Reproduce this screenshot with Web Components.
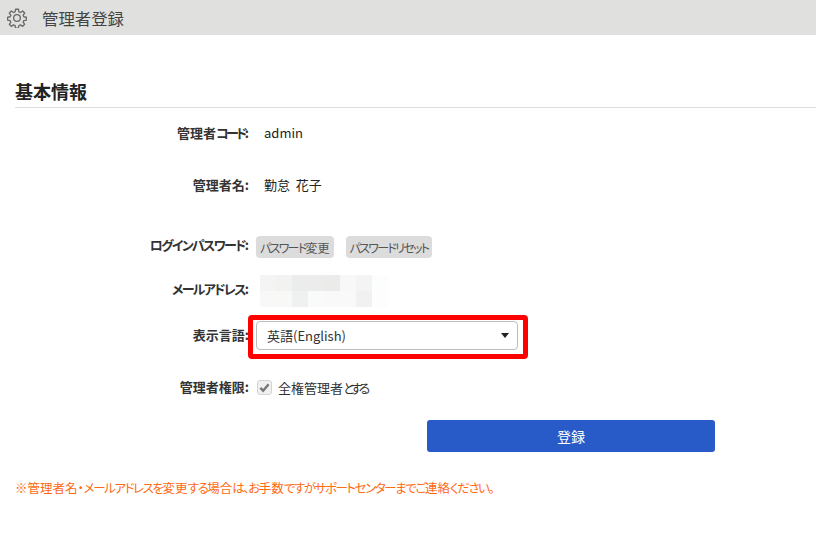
<!DOCTYPE html>
<html lang="ja"><head><meta charset="utf-8">
<style>
html,body{margin:0;padding:0;background:#fff}
body{font-family:"Noto Sans CJK JP","Noto Sans",sans-serif;color:#222;width:816px;height:536px;overflow:hidden;font-feature-settings:"palt"}
</style></head><body>
<app-header>管理者登録</app-header>
<main-form></main-form>
<template id="t-header"><style>
:host{display:flex;align-items:center;height:35px;background:#e0e0de;padding-left:7px;gap:15px;color:#444;font-size:16.4px;font-feature-settings:normal}
svg{display:block;width:20px;height:20px}
</style>
<svg viewBox="0 0 24 24" fill="none" stroke="#6a6a6a" stroke-width="1.6" stroke-linejoin="round"><circle cx="12" cy="12" r="4"/><path d="M10.3 1.5h3.4l.6 3.1 1.9.8 2.6-1.8 2.4 2.4-1.8 2.6.8 1.9 3.1.6v3.4l-3.1.6-.8 1.9 1.8 2.6-2.4 2.4-2.6-1.8-1.9.8-.6 3.1h-3.4l-.6-3.1-1.9-.8-2.6 1.8-2.4-2.4 1.8-2.6-.8-1.9-3.1-.6v-3.4l3.1-.6.8-1.9-1.8-2.6 2.4-2.4 2.6 1.8 1.9-.8z"/></svg>
<span><slot></slot></span></template>
<template id="t-row"><style>
:host{display:grid;grid-template-columns:249px 1fr;column-gap:7px;align-items:center;height:var(--h,20px)}
.l{text-align:right;font-size:13px;font-weight:700;color:#333;white-space:nowrap;padding-bottom:var(--lo,0)}
.v{display:flex;align-items:center;gap:12px;font-size:13px;min-width:0}
</style><div class="l"><slot name="label"></slot></div><div class="v"><slot></slot></div></template>
<template id="t-btn"><style>
:host{display:inline-flex;align-items:center;justify-content:center;height:22px;padding:0 4px;background:#dcdcdc;border-radius:4px;font-size:12px;color:#555;white-space:nowrap}
</style><slot></slot></template>
<template id="t-mosaic"><style>
:host{display:grid;grid-template-columns:repeat(8,16px);grid-auto-rows:16px}
i{display:block}
</style></template>
<template id="t-select"><style>
:host{display:block;position:relative;width:262px;height:29px;box-sizing:border-box;border:1px solid #bcbcbc;border-radius:4px;font-size:13px;color:#333}
.t{display:flex;align-items:center;justify-content:space-between;height:100%;padding:0 8px 1px 10px;box-sizing:border-box;font-feature-settings:normal}
.a{width:0;height:0;border:4px solid transparent;border-top:5px solid #222;border-bottom:0}
.r{position:absolute;left:-9px;right:-11px;top:-7px;bottom:-10px;border:5px solid #f00;border-radius:4px;pointer-events:none}
</style><div class="t"><span>英語(English)</span><span class="a"></span></div><div class="r"></div></template>
<template id="t-check"><style>
:host{display:inline-flex;align-items:center;gap:7px;font-size:13px;color:#333}
.b{width:15px;height:15px;margin-left:1px;margin-right:-1px;box-sizing:border-box;border:1px solid #d4d4d4;border-radius:3px;background:#f0f0f0;display:flex;align-items:center;justify-content:center}
svg{width:11px;height:11px;display:block}
</style><span class="b"><svg viewBox="0 0 12 12"><path d="M1.5 6.5l3 3 6-7" fill="none" stroke="#777" stroke-width="2.6"/></svg></span><span><slot></slot></span></template>
<template id="t-form"><style>
:host{display:block}
h2{margin:42px 0 0 15px;height:31px;box-sizing:border-box;border-bottom:1px solid #ddd;font-size:18px;font-weight:700;line-height:29px;color:#222}
.val{padding-left:8px}
.k{letter-spacing:var(--ls,-1.7px)}
.actions{display:flex;justify-content:flex-start;padding-left:427px;margin-top:23px}
.submit{width:288px;height:32px;border-radius:3px;background:#285bc8;color:#fff;font-size:14px;display:flex;align-items:center;justify-content:center;font-feature-settings:normal}
.note{margin:26px 0 0 15px;color:#ff6a13;font-size:12.5px;line-height:20px;white-space:nowrap;--ls:-1.43px}
</style>
<h2>基本情報</h2>
<form-row style="--h:20px;margin-top:14px"><span slot="label">管理者<span class="k" style="--ls:-2.7px">コード</span>:</span><span class="val">admin</span></form-row>
<form-row style="--h:20px;margin-top:32px"><span slot="label">管理者名:</span><span class="val">勤怠&nbsp;&nbsp;花子</span></form-row>
<form-row style="--h:22px;margin-top:41px;--lo:5px"><span slot="label"><span class="k">ログインパスワード</span>:</span><small-btn><span class="k">パスワード</span>変更</small-btn><small-btn><span class="k" style="--ls:-1.7px">パスワードリセット</span></small-btn></form-row>
<form-row style="--h:32px;margin-top:18px;--lo:5px"><span slot="label"><span class="k">メールアドレス</span>:</span><mosaic-box style="margin-left:4px"></mosaic-box></form-row>
<form-row style="--h:29px;margin-top:14px;--lo:2px"><span slot="label">表示言語:</span><lang-select></lang-select></form-row>
<form-row style="--h:20px;margin-top:27px;--lo:2px"><span slot="label">管理者権限:</span><check-box>全権管理者<span class="k" style="--ls:-3.6px">とする</span></check-box></form-row>
<div class="actions"><div class="submit">登録</div></div>
<p class="note">※管理者名・<span class="k">メールアドレスを</span>変更<span class="k">する</span>場合<span class="k">は、お</span>手数<span class="k">ですがサポートセンターまで</span><span class="k">ご</span>連絡<span class="k">ください。</span></p>
</template>
<script>
function def(name,tid,init){customElements.define(name,class extends HTMLElement{constructor(){super();const s=this.attachShadow({mode:'open'});s.appendChild(document.getElementById(tid).content.cloneNode(true));if(init)init(s)}})}
def('app-header','t-header');
def('form-row','t-row');
def('small-btn','t-btn');
def('lang-select','t-select');
def('check-box','t-check');
def('mosaic-box','t-mosaic',s=>{
 const c=['#f4f4f4','#f2f2f0','#ebedec','#ebeceb','#ebebea','#f8f8f8','#f4f4f4','#fcfdfd','#f8f8f8','#f8f8f6','#eff1f0','#f9fafa','#f9f9f9','#f9f9f9','#f1f1f1','#fdfdfd'];
 c.forEach(x=>{const i=document.createElement('i');i.style.background=x;s.appendChild(i)});
});
def('main-form','t-form');
</script>
</body></html>
